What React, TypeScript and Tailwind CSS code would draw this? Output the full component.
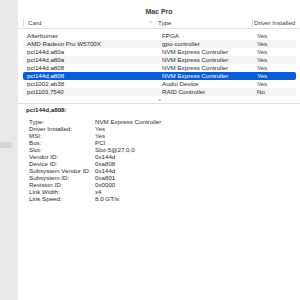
import React from "react";

const rows = [
  { card: "Afterburner", type: "FPGA", driver: "Yes" },
  { card: "AMD Radeon Pro W5700X", type: "gpu-controller", driver: "Yes" },
  { card: "pci144d,a80a", type: "NVM Express Controller", driver: "Yes" },
  { card: "pci144d,a80a", type: "NVM Express Controller", driver: "Yes" },
  { card: "pci144d,a808", type: "NVM Express Controller", driver: "Yes" },
  { card: "pci144d,a808", type: "NVM Express Controller", driver: "Yes" },
  { card: "pci1002,ab38", type: "Audio Device", driver: "Yes" },
  { card: "pci1103,7540", type: "RAID Controller", driver: "No" },
];

const details = [
  ["Type:", "NVM Express Controller"],
  ["Driver Installed:", "Yes"],
  ["MSI:", "Yes"],
  ["Bus:", "PCI"],
  ["Slot:", "Slot-5@27,0,0"],
  ["Vendor ID:", "0x144d"],
  ["Device ID:", "0xa808"],
  ["Subsystem Vendor ID:", "0x144d"],
  ["Subsystem ID:", "0xa801"],
  ["Revision ID:", "0x0000"],
  ["Link Width:", "x4"],
  ["Link Speed:", "8.0 GT/s"],
];

export default function App() {
  const selected = 5;
  return (
    <div className="flex h-[300px] w-[300px] overflow-hidden bg-white text-[6.2px] leading-none text-[#2a2a2a] [font-family:'Liberation_Sans',Arial,sans-serif]">
      {/* sidebar */}
      <div className="w-[18px] shrink-0 bg-[#e9e9e7] pt-[142px]">
        <div className="h-[6px] w-[12px] rounded-r-[3px] bg-[#d5d5d4]" />
      </div>

      <div className="flex min-w-0 flex-1 flex-col">
        <div className="flex h-[18px] items-end justify-center pb-[3px] text-[7px] font-bold text-[#3a3a3a]">
          Mac Pro
        </div>

        {/* header */}
        <div className="flex h-[11px] items-center border-b border-[#e2e2e2] text-[#3c3c3c]">
          <div className="ml-[5px] h-[8px] w-px bg-[#dcdcdc]" />
          <div className="w-[125px] pl-[4px]">Card</div>
          <div className="w-[9px] text-[#a0a0a0]">^</div>
          <div className="w-[94px]">Type</div>
          <div className="h-[8px] w-px bg-[#dcdcdc]" />
          <div className="pl-[1px] whitespace-nowrap">Driver Installed</div>
        </div>

        {/* list */}
        <div className="flex flex-col pt-[3px] pr-[4px] pl-[5px]">
          {rows.map((r, i) => (
            <div
              key={i}
              className={
                "flex h-[8px] items-center rounded-[2px] " +
                (i === selected
                  ? "bg-[#0a5dd6] text-white"
                  : i % 2 === 1
                  ? "bg-[#f4f4f4]"
                  : "")
              }
            >
              <div className="w-[139px] pl-[4px] whitespace-nowrap">{r.card}</div>
              <div className="w-[95px] whitespace-nowrap">{r.type}</div>
              <div>{r.driver}</div>
            </div>
          ))}
        </div>

        <div className="flex h-[7px] items-center justify-center">
          <div className="h-[2px] w-[3px] rounded-full bg-[#c8c8c8]" />
        </div>

        <div className="border-t border-[#dedede] pt-[3px] pl-[8px]">
          <div className="font-bold text-[#222]">pci144d,a808:</div>
          <div className="mt-[5px] flex flex-col pl-[3px]">
            {details.map(([k, v]) => (
              <div key={k} className="flex h-[7px] items-center">
                <div className="w-[66px] whitespace-nowrap">{k}</div>
                <div className="whitespace-nowrap">{v}</div>
              </div>
            ))}
          </div>
        </div>
      </div>
    </div>
  );
}
